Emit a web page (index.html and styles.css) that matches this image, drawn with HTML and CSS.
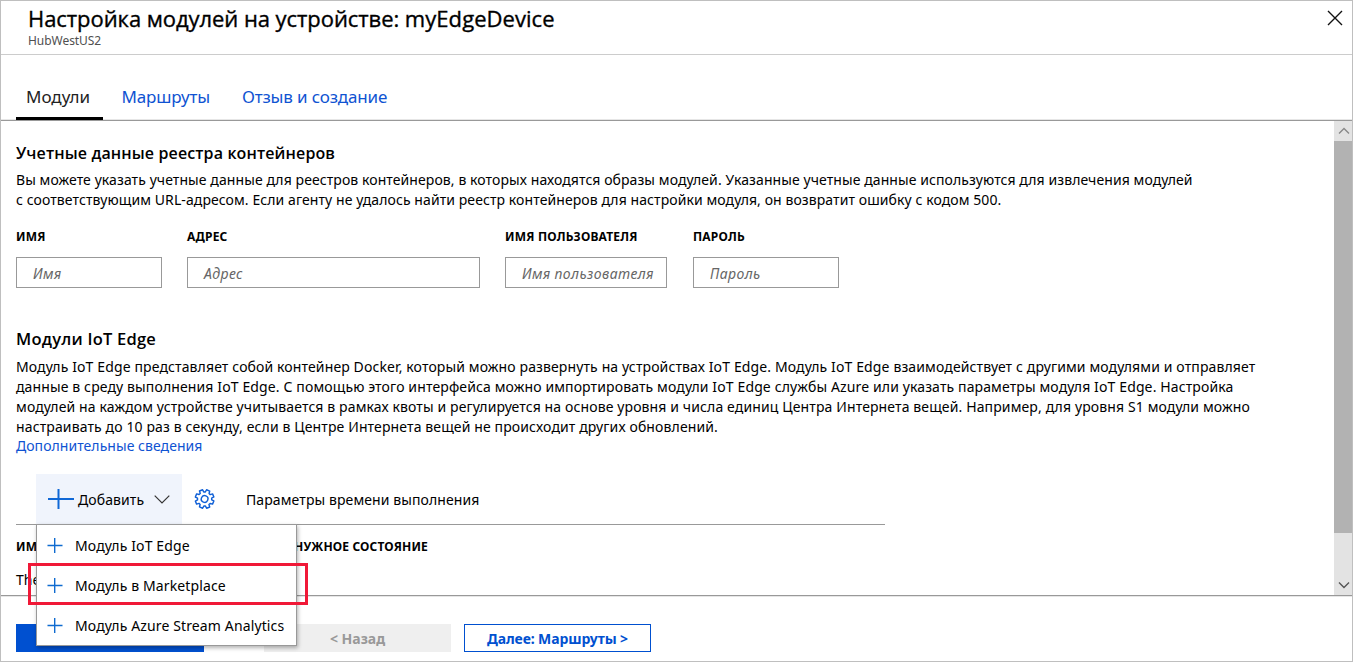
FILE: index.html
```html
<!DOCTYPE html>
<html lang="ru">
<head>
<meta charset="utf-8">
<title>Настройка модулей на устройстве</title>
<link rel="stylesheet" href="styles.css">
</head>
<body>
<div class="blade">
  <header class="header">
    <div>
      <h1 class="title"><span>Настройка модулей на устройстве:</span> <span class="device">myEdgeDevice</span></h1>
      <div class="subtitle">HubWestUS2</div>
    </div>
    <svg class="close" width="16" height="16" viewBox="0 0 16 16"><path d="M1 1L15 15M15 1L1 15"/></svg>
  </header>
  <nav class="tabs">
    <a class="tab tab-active"><span>Модули</span></a>
    <a class="tab"><span>Маршруты</span></a>
    <a class="tab"><span>Отзыв и создание</span></a>
  </nav>
  <div class="scroll">
    <main class="content">
      <h2 class="heading h-registry">Учетные данные реестра контейнеров</h2>
      <p class="para para-registry">
        <span class="line">Вы можете указать учетные данные для реестров контейнеров, в которых находятся образы модулей. Указанные учетные данные используются для извлечения модулей</span>
        <span class="line">с соответствующим URL-адресом. Если агенту не удалось найти реестр контейнеров для настройки модуля, он возвратит ошибку с кодом 500.</span>
      </p>
      <div class="fields">
        <div class="field"><span class="label">ИМЯ</span><div class="input">Имя</div></div>
        <div class="field"><span class="label">АДРЕС</span><div class="input">Адрес</div></div>
        <div class="field"><span class="label">ИМЯ ПОЛЬЗОВАТЕЛЯ</span><div class="input">Имя пользователя</div></div>
        <div class="field field-last"><span class="label">ПАРОЛЬ</span><div class="input">Пароль</div></div>
      </div>
      <h2 class="heading h-modules">Модули IoT Edge</h2>
      <p class="para para-modules">
        <span class="line">Модуль IoT Edge представляет собой контейнер Docker, который можно развернуть на устройствах IoT Edge. Модуль IoT Edge взаимодействует с другими модулями и отправляет</span>
        <span class="line">данные в среду выполнения IoT Edge. С помощью этого интерфейса можно импортировать модули IoT Edge службы Azure или указать параметры модуля IoT Edge. Настройка</span>
        <span class="line">модулей на каждом устройстве учитывается в рамках квоты и регулируется на основе уровня и числа единиц Центра Интернета вещей. Например, для уровня S1 модули можно</span>
        <span class="line">настраивать до 10 раз в секунду, если в Центре Интернета вещей не происходит других обновлений.</span>
      </p>
      <a class="more">Дополнительные сведения</a>
      <div class="toolbar">
        <div class="add">
          <svg class="plus-lg" width="26" height="20" viewBox="0 0 26 20"><path d="M0 10H26M10.5 0V20"/></svg>
          <span class="add-text">Добавить</span>
          <svg class="chev" width="16" height="9" viewBox="0 0 16 9"><path d="M.7 .7L8 8L15.3 .7"/></svg>
          <div class="menu">
            <div class="item"><svg class="plus" width="16" height="16" viewBox="0 0 16 16"><path d="M.5 7.5H15.5M7.7 0V15"/></svg><span>Модуль IoT Edge</span></div>
            <div class="item"><svg class="plus" width="16" height="16" viewBox="0 0 16 16"><path d="M.5 7.5H15.5M7.7 0V15"/></svg><span>Модуль в Marketplace</span></div>
            <div class="item"><svg class="plus" width="16" height="16" viewBox="0 0 16 16"><path d="M.5 7.5H15.5M7.7 0V15"/></svg><span>Модуль Azure Stream Analytics</span></div>
            <div class="highlight"></div>
          </div>
        </div>
        <svg class="gear" width="22" height="22" viewBox="0 0 22 22"><g transform="translate(10.6 11) rotate(22.5) scale(.95) translate(-11 -11)"><path d="M9.2 1.2H12.8L13.1 3.8L14.7 4.5L16.7 2.8L19.2 5.3L17.5 7.3L18.2 8.9L20.8 9.2V12.8L18.2 13.1L17.5 14.7L19.2 16.7L16.7 19.2L14.7 17.5L13.1 18.2L12.8 20.8H9.2L8.9 18.2L7.3 17.5L5.3 19.2L2.8 16.7L4.5 14.7L3.8 13.1L1.2 12.8V9.2L3.8 8.9L4.5 7.3L2.8 5.3L5.3 2.8L7.3 4.5L8.9 3.8Z"/><circle cx="11" cy="11" r="3.5"/></g></svg>
        <span class="runtime">Параметры времени выполнения</span>
      </div>
      <div class="table">
        <div class="row row-head"><span>ИМЯ</span><span>НУЖНОЕ СОСТОЯНИЕ</span></div>
        <div class="row">There</div>
      </div>
    </main>
    <div class="scrollbar">
      <svg class="arrow arrow-up" width="12" height="8" viewBox="0 0 12 8"><path d="M1 6.5L6 1.5L11 6.5"/></svg>
      <div class="thumb"></div>
      <svg class="arrow arrow-down" width="12" height="8" viewBox="0 0 12 8"><path d="M1 1.5L6 6.5L11 1.5"/></svg>
    </div>
  </div>
  <footer class="footer">
    <div class="btn primary"></div>
    <div class="btn back">&lt; Назад</div>
    <div class="btn next">Далее: Маршруты &gt;</div>
  </footer>
</div>
</body>
</html>
```
FILE: styles.css
```css
* { box-sizing: border-box; }
body { margin: 0; background: #fff; color: #000; font: 14px/20px "Noto Sans", "Open Sans", sans-serif; }
h1, h2, p { margin: 0; }
svg { display: block; fill: none; flex: none; }
span { white-space: nowrap; }
.blade { width: 1353px; height: 662px; border: 1px solid #bfbfbf; display: flex; flex-direction: column; overflow: hidden; }

.header { height: 54px; flex: none; display: flex; justify-content: space-between; padding: 2px 9px 0 27px; border-bottom: 1px solid #ccc; }
.title { font: 400 22px/30px "Open Sans", "Noto Sans", sans-serif; letter-spacing: -.06px; -webkit-text-stroke: .35px #000; }
.device { letter-spacing: .05px; }
.subtitle { margin-top: 1px; font-size: 12px; line-height: 14px; color: #505050; letter-spacing: -.05px; }
.close { margin-top: 7px; stroke: #111; stroke-width: 1.4; }

.tabs { height: 66px; flex: none; display: flex; align-items: flex-end; gap: 22px; padding-left: 15px; border-bottom: 1px solid #999; box-shadow: inset 0 -1px #e6e6e6; }
.tab { height: 44px; padding: 9px 5px 0; font-size: 17px; line-height: 24px; letter-spacing: -.16px; color: #0f53d2; }
.tab:nth-child(2) { margin-left: -8.5px; }
.tab-active { width: 87px; padding-left: 10px; letter-spacing: 0; color: #222; border-bottom: 3px solid #000; }

.scroll { position: relative; z-index: 1; height: 474px; flex: none; display: flex; justify-content: space-between; }
.content { width: 1300px; padding: 20px 0 0 15px; }
.heading { font: 600 16px/24px "Open Sans", "Noto Sans", sans-serif; }
.h-registry { letter-spacing: .12px; }
.para { padding-top: 5px; }
.para-registry { letter-spacing: .085px; }
.para-modules { padding-top: 6px; letter-spacing: .124px; }
.line { display: block; }
.fields { display: grid; grid-template-columns: 146px 293px 162px 147px; gap: 25px; margin-top: 17px; }
.field-last { padding-left: 1px; }
.label { display: block; font-size: 12px; font-weight: 700; line-height: 20px; letter-spacing: .2px; }
.input { height: 31px; margin-top: 10px; border: 1px solid #999; padding: 6px 0 0 16px; color: #666; font-style: italic; line-height: 20px; letter-spacing: .42px; white-space: nowrap; }
.h-modules { margin-top: 39px; font-size: 16.5px; letter-spacing: .22px; }
.more { display: block; line-height: 18px; letter-spacing: .05px; color: #0f53d2; }

.toolbar { height: 50px; margin-top: 19px; display: flex; align-items: center; }
.add { position: relative; width: 146px; height: 50px; margin-left: 20px; padding-left: 12px; display: flex; align-items: center; background: #f0f4fc; }
.plus-lg { stroke: #1068d6; stroke-width: 2; }
.add-text { width: 66px; margin-left: 4px; padding-top: 1px; letter-spacing: .1px; }
.chev { margin-left: 10px; stroke: #333; stroke-width: 1.2; }
.gear { margin-left: 12px; stroke: #0f5fd6; stroke-width: 1.5; stroke-linejoin: round; }
.runtime { margin-left: 30px; padding-top: 1px; letter-spacing: .1px; }

.menu { position: absolute; left: 0; top: 50px; z-index: 2; width: 261px; height: 122px; background: #fff; border: 1px solid #999; box-shadow: 1px 2px 4px rgba(0,0,0,.3); }
.item { height: 40px; display: flex; align-items: center; gap: 12px; padding: 1px 0 0 10px; letter-spacing: .13px; }
.plus { stroke: #0f6bd0; stroke-width: 1.4; }
.highlight { position: absolute; left: -9px; top: 38px; width: 280px; height: 42px; border: 3px solid #f01837; }

.table { width: 869px; border-top: 1px solid #999; }
.row { height: 34px; padding-top: 11px; line-height: 20px; }
.row-head { display: grid; grid-template-columns: 278px 1fr; padding-top: 12px; font-size: 12px; font-weight: 700; letter-spacing: .15px; }

.scrollbar { width: 18px; height: 474px; background: #e3e3e3; display: flex; flex-direction: column; align-items: center; }
.thumb { width: 18px; height: 392px; background: #b2b2b2; }
.arrow { margin: 6px 0 6px 2px; stroke: #888; stroke-width: 1.4; }
.arrow-down { margin-top: 48px; stroke: #555; }

.footer { flex: 1; display: flex; padding: 28px 0 0 15px; border-top: 1px solid #999; box-shadow: inset 0 1px #e6e6e6; }
.btn { height: 28px; font-weight: 700; line-height: 29px; text-align: center; }
.primary { width: 188px; background: #0050d0; }
.back { width: 187px; margin-left: 60px; background: #efefef; color: #999; }
.next { width: 187px; margin-left: 13px; border: 1px solid #0050d0; color: #0050d0; line-height: 27px; letter-spacing: -.1px; }
```
